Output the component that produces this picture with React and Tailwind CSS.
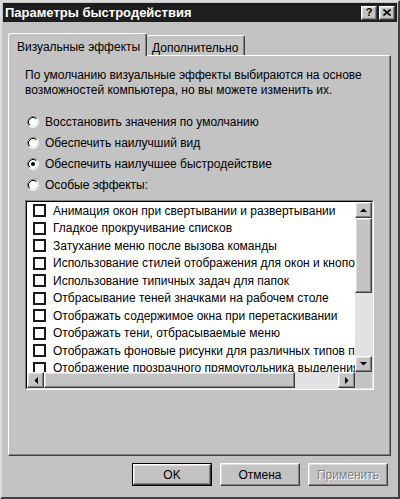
const raised =
    'border border-t-white border-l-white border-r-[#404040] border-b-[#404040] shadow-[inset_-1px_-1px_0_#808080,inset_1px_1px_0_#dfdfdf]';

const effects = [
    'Анимация окон при свертывании и развертывании',
    'Гладкое прокручивание списков',
    'Затухание меню после вызова команды',
    'Использование стилей отображения для окон и кнопок',
    'Использование типичных задач для папок',
    'Отбрасывание теней значками на рабочем столе',
    'Отображать содержимое окна при перетаскивании',
    'Отображать тени, отбрасываемые меню',
    'Отображать фоновые рисунки для различных типов папок',
    'Отображение прозрачного прямоугольника выделения',
];

const Radio = ({checked}) => (
    <svg width="12" height="12" viewBox="0 0 12 12" className="shrink-0">
        <circle cx="6" cy="6" r="5" fill="white" />
        <path d="M2.11 9.89 A5.5 5.5 0 0 1 9.89 2.11" stroke="#808080" strokeWidth="1" fill="none" />
        <path d="M2.11 9.89 A5.5 5.5 0 0 0 9.89 2.11" stroke="#ffffff" strokeWidth="1" fill="none" />
        <path d="M2.82 9.18 A4.5 4.5 0 0 1 9.18 2.82" stroke="#000000" strokeWidth="1" fill="none" />
        <path d="M2.82 9.18 A4.5 4.5 0 0 0 9.18 2.82" stroke="#dfdfdf" strokeWidth="1" fill="none" />
        {checked && <circle cx="6" cy="6" r="2" fill="black" />}
    </svg>
);

const Arrow = ({dir}) => {
    const pts = {
        up: '0,4 7,4 3.5,0.5',
        down: '0,0 7,0 3.5,3.5',
        left: '4,0 4,7 0.5,3.5',
        right: '0,0 0,7 3.5,3.5',
    }[dir];
    const vertical = dir === 'up' || dir === 'down';
    return (
        <svg width={vertical ? 7 : 4} height={vertical ? 4 : 7} viewBox={vertical ? '0 0 7 4' : '0 0 4 7'}>
            <polygon points={pts} fill="black" />
        </svg>
    );
};

const ScrollBtn = ({dir, className}) => (
    <div className={`${raised} bg-[#c3c3c3] flex items-center justify-center shrink-0 ${className}`}>
        <Arrow dir={dir} />
    </div>
);

const Button = ({children, isDefault, disabled}) => (
    <div className={`w-[80px] h-[23px] ${isDefault ? 'border border-black' : ''}`}>
        <div
            className={`${raised} h-full bg-[#c3c3c3] flex items-center justify-center text-[12px] ${
                disabled ? 'text-[#808080] [text-shadow:1px_1px_0_#ffffff]' : 'text-black'
            }`}
        >
            {children}
        </div>
    </div>
);

export default function App() {
    return (
        <div className="w-[400px] h-[499px] bg-[#c3c3c3] border-2 border-t-[#dcdcdc] border-l-[#dcdcdc] border-r-[#404040] border-b-[#404040] px-[1px] pt-[1px] flex flex-col font-['Liberation_Sans',Arial,sans-serif] text-black overflow-hidden">
            {/* title bar */}
            <div className="h-[19px] bg-[#1e1e1e] flex items-center justify-between pl-[2px] pr-[2px] shrink-0">
                <span className="text-white font-bold text-[13px] leading-none">Параметры быстродействия</span>
                <div className="flex gap-[2px]">
                    <div className={`${raised} w-[16px] h-[14px] bg-[#c3c3c3] flex items-center justify-center text-[11px] font-bold leading-none`}>
                        ?
                    </div>
                    <div className={`${raised} w-[16px] h-[14px] bg-[#c3c3c3] flex items-center justify-center`}>
                        <svg width="8" height="7" viewBox="0 0 8 7">
                            <path d="M0.5 0.5 L7.5 6.5 M7.5 0.5 L0.5 6.5" stroke="black" strokeWidth="1.6" />
                        </svg>
                    </div>
                </div>
            </div>

            {/* tabs */}
            <div className="mt-[11px] ml-[5px] flex items-end h-[23px] relative z-10">
                <div className="w-[139px] h-[23px] bg-[#c3c3c3] border-t border-l border-white border-r border-r-[#404040] rounded-t-[3px] shadow-[inset_-1px_0_0_#808080] pl-[8px] pt-[4px] text-[12px]">
                    Визуальные эффекты
                </div>
                <div className="w-[98px] h-[20px] mb-[1px] bg-[#c3c3c3] border-t border-white border-r border-r-[#404040] rounded-t-[3px] shadow-[inset_-1px_0_0_#808080] pl-[5px] pt-[3px] text-[12px]">
                    Дополнительно
                </div>
            </div>

            {/* panel */}
            <div className="ml-[5px] -mt-[1px] w-[383px] h-[401px] border border-t-white border-l-white border-r-[#404040] border-b-[#404040] shadow-[inset_-1px_-1px_0_#808080] px-[16px] pt-[12px] shrink-0">
                <p className="text-[12px] leading-[15px]">
                    По умолчанию визуальные эффекты выбираются на основе
                    <br />
                    возможностей компьютера, но вы можете изменить их.
                </p>

                <div className="mt-[13px] flex flex-col">
                    {[
                        ['Восстановить значения по умолчанию', false],
                        ['Обеспечить наилучший вид', false],
                        ['Обеспечить наилучшее быстродействие', true],
                        ['Особые эффекты:', false],
                    ].map(([label, checked]) => (
                        <div key={label} className="h-[21px] flex items-center pl-[2px] gap-[6px] text-[12px]">
                            <Radio checked={checked} />
                            <span>{label}</span>
                        </div>
                    ))}
                </div>

                {/* list box */}
                <div className="mt-[5px] w-[349px] h-[190px] border border-t-[#808080] border-l-[#808080] border-r-white border-b-white">
                    <div className="h-full border border-t-black border-l-black border-r-[#dfdfdf] border-b-[#dfdfdf] bg-white flex flex-col">
                        <div className="flex h-[170px]">
                            <div className="flex-1 overflow-hidden">
                                {effects.map((e) => (
                                    <div key={e} className="h-[17.5px] flex items-center pl-[6px] gap-[7px] whitespace-nowrap text-[12px]">
                                        <div className="w-[13px] h-[13px] border-2 border-[#1a1a1a] bg-white shrink-0" />
                                        <span>{e}</span>
                                    </div>
                                ))}
                            </div>
                            <div className="w-[17px] flex flex-col shrink-0">
                                <ScrollBtn dir="up" className="h-[16px]" />
                                <div className={`${raised} h-[75px] bg-[#c3c3c3]`} />
                                <div className="flex-1 bg-[#e2e2e2]" />
                                <ScrollBtn dir="down" className="h-[16px]" />
                            </div>
                        </div>
                        <div className="flex h-[16px]">
                            <ScrollBtn dir="left" className="w-[17px]" />
                            <div className={`${raised} w-[251px] bg-[#c3c3c3]`} />
                            <div className="flex-1 bg-[#e2e2e2]" />
                            <ScrollBtn dir="right" className="w-[17px]" />
                            <div className="w-[17px] bg-[#c3c3c3]" />
                        </div>
                    </div>
                </div>
            </div>

            {/* buttons */}
            <div className="mt-[7px] ml-[5px] w-[383px] flex justify-end gap-[8px] pr-[3px]">
                <Button isDefault>OK</Button>
                <Button>Отмена</Button>
                <Button disabled>Применить</Button>
            </div>
        </div>
    );
}
